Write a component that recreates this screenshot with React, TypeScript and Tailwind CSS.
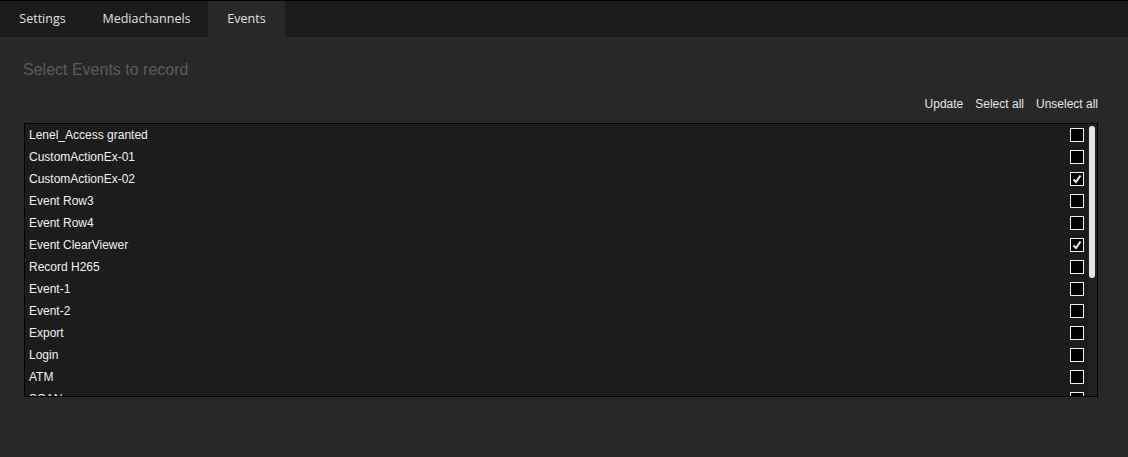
import { useState } from 'react';

const EVENTS: { name: string; checked: boolean }[] = [
  { name: 'Lenel_Access granted', checked: false },
  { name: 'CustomActionEx-01', checked: false },
  { name: 'CustomActionEx-02', checked: true },
  { name: 'Event Row3', checked: false },
  { name: 'Event Row4', checked: false },
  { name: 'Event ClearViewer', checked: true },
  { name: 'Record H265', checked: false },
  { name: 'Event-1', checked: false },
  { name: 'Event-2', checked: false },
  { name: 'Export', checked: false },
  { name: 'Login', checked: false },
  { name: 'ATM', checked: false },
  { name: 'SCAN', checked: false },
];

const TABS = [
  { label: 'Settings', w: 'w-[85px]' },
  { label: 'Mediachannels', w: 'w-[123px]' },
  { label: 'Events', w: 'w-[77px]' },
];

export default function App() {
  const [events, setEvents] = useState(EVENTS);

  const toggle = (i: number) =>
    setEvents((prev) => prev.map((e, j) => (j === i ? { ...e, checked: !e.checked } : e)));

  return (
    <div className="h-[457px] w-[1128px] overflow-hidden bg-[#282828]">
      {/* Tabs */}
      <div className="flex h-[37px] border-t border-black bg-[#1c1c1c] font-['Open_Sans',sans-serif] text-[12.5px] text-[#e0e0e0]">
        {TABS.map((t) => (
          <div
            key={t.label}
            className={
              t.label === 'Events'
                ? `flex items-center justify-center bg-[#282828] ${t.w}`
                : `flex items-center justify-center ${t.w}`
            }
          >
            {t.label}
          </div>
        ))}
      </div>

      <div className="px-[24px] font-['Liberation_Sans',Arial,sans-serif]">
        <h2 className="ml-[-1px] mt-[23px] text-[16px] leading-[20px] text-[#5c5c5c]">
          Select Events to record
        </h2>

        <div className="mt-[17px] flex justify-end gap-[12px] pr-[6px] text-[12px] leading-[14px] text-[#e6e6e6]">
          <button>Update</button>
          <button>Select all</button>
          <button>Unselect all</button>
        </div>

        {/* Event list */}
        <div className="mt-[12px] flex h-[274px] w-[1074px] border border-black bg-[#1c1c1c]">
          <div className="flex-1 overflow-hidden">
            {events.map((e, i) => (
              <div key={e.name} className="flex h-[22px] items-center justify-between pl-[4px] pr-[4px]">
                <span className="text-[12px] text-[#f0f0f0]">{e.name}</span>
                <button
                  onClick={() => toggle(i)}
                  className="flex h-[14px] w-[14px] items-center justify-center border border-[#f0f0f0] bg-black"
                >
                  {e.checked && (
                    <svg width="10" height="10" viewBox="0 0 10 10">
                      <path d="M1.5 5.5 L4 8 L8.5 1.5" fill="none" stroke="#f0f0f0" strokeWidth="2" />
                    </svg>
                  )}
                </button>
              </div>
            ))}
          </div>
          <div className="flex w-[9px] flex-col bg-[#222222] pl-[1px] pr-[2px] pt-[2px] pb-[3px]">
            <div className="h-[152px] rounded-full bg-[#e6e6e6]" />
          </div>
        </div>
      </div>
    </div>
  );
}
